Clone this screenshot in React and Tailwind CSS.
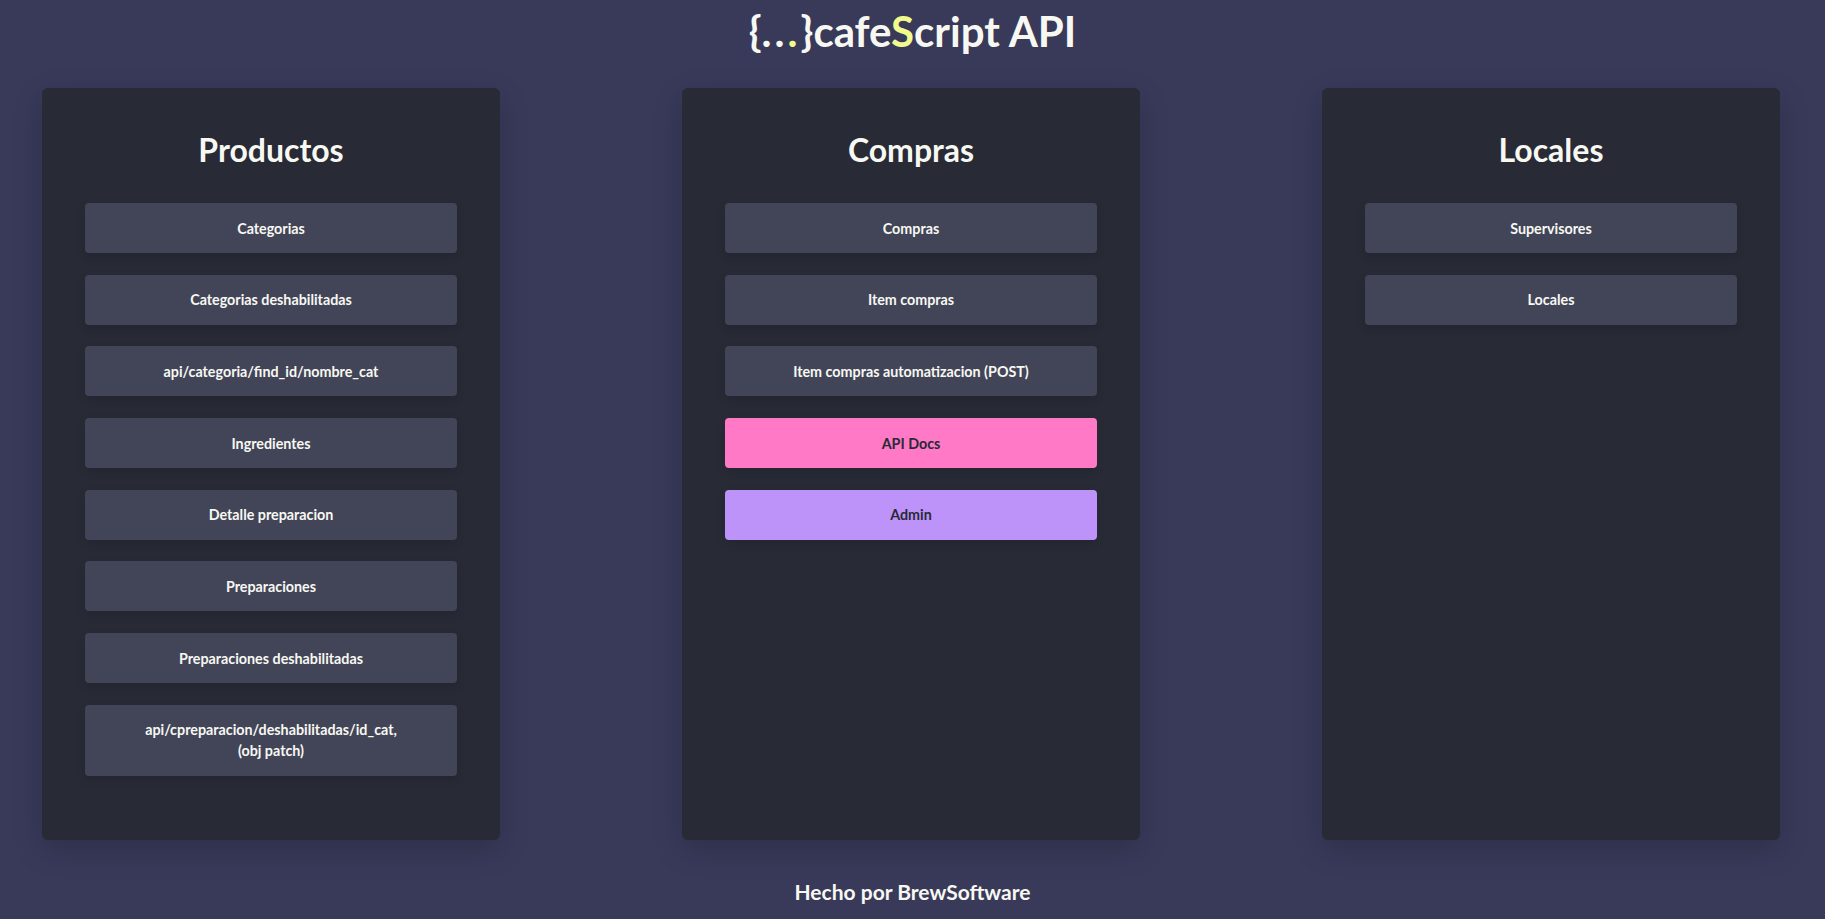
import React from 'react';

const sections = [
  {
    title: 'Productos',
    links: [
      'Categorias',
      'Categorias deshabilitadas',
      'api/categoria/find_id/nombre_cat',
      'Ingredientes',
      'Detalle preparacion',
      'Preparaciones',
      'Preparaciones deshabilitadas',
      'api/cpreparacion/deshabilitadas/id_cat,\n(obj patch)',
    ],
  },
  {
    title: 'Compras',
    links: [
      'Compras',
      'Item compras',
      'Item compras automatizacion (POST)',
      { label: 'API Docs', tone: 'pink' },
      { label: 'Admin', tone: 'purple' },
    ],
  },
  {
    title: 'Locales',
    links: ['Supervisores', 'Locales'],
  },
];

function LinkButton({ item }) {
  const label = typeof item === 'string' ? item : item.label;
  const tone = typeof item === 'string' ? 'default' : item.tone;

  let colors = 'bg-[#424558] text-[#f8f8f2]';
  if (tone === 'pink') colors = 'bg-[#ff79c6] text-[#282a36]';
  if (tone === 'purple') colors = 'bg-[#bd93f9] text-[#282a36]';

  return (
    <a
      href="#"
      className={`${colors} block w-full rounded-[4px] px-4 py-[14.5px] text-center text-[14.3px] font-bold leading-[21px] whitespace-pre-line shadow-[0_4px_10px_rgba(0,0,0,0.12)]`}
    >
      {label}
    </a>
  );
}

function Section({ title, links }) {
  return (
    <div className="flex w-[458px] flex-col rounded-[6px] bg-[#282a36] px-[43px] pt-[40px] pb-[64px] shadow-[0_10px_30px_rgba(0,0,0,0.18)]">
      <h2 className="mb-[31px] text-center text-[32px] font-bold leading-[44px] text-[#f8f8f2]">{title}</h2>
      <div className="flex flex-col gap-[21.7px]">
        {links.map((item, i) => (
          <LinkButton key={i} item={item} />
        ))}
      </div>
    </div>
  );
}

export default function App() {
  return (
    <div
      className="min-h-screen bg-[#393a5a] text-[#f8f8f2]"
      style={{ fontFamily: 'Lato, "Open Sans", sans-serif' }}
    >
      {/* Header */}
      <h1 className="pt-[7px] text-center text-[42px] font-bold leading-[48px] text-[#f8f8f2]">
        {'{'}<span className="tracking-[3px]">..<span className="text-[#f1fa8c]">.</span></span>{'}'}cafe<span className="text-[#f1fa8c]">S</span>cript API
      </h1>

      {/* Cards */}
      <div className="mt-[33px] flex gap-[182px] pl-[42px]">
        {sections.map((s) => (
          <Section key={s.title} title={s.title} links={s.links} />
        ))}
      </div>

      {/* Footer */}
      <footer className="pt-[39px] pb-[14px] text-center text-[21px] font-bold leading-[26px] text-[#f8f8f2]">
        Hecho por BrewSoftware
      </footer>
    </div>
  );
}
